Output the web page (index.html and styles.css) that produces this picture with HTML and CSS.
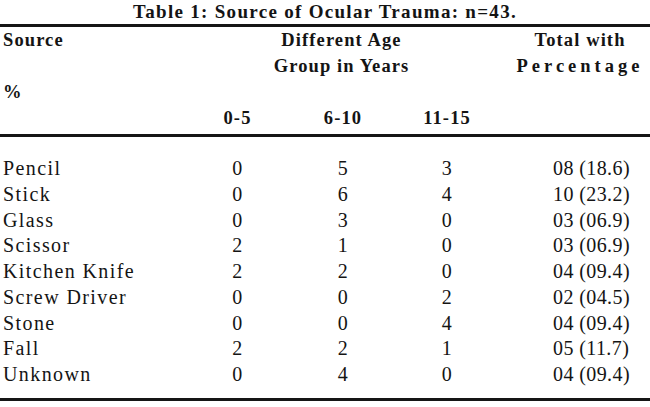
FILE: index.html
```html
<!DOCTYPE html>
<html>
<head>
<meta charset="utf-8">
<link rel="stylesheet" href="styles.css">
</head>
<body>
<div class="caption">Table 1: Source of Ocular Trauma: n=43.</div>
<table class="trauma">
  <colgroup>
    <col class="c-src"><col class="c-age"><col class="c-age2"><col class="c-age3"><col class="c-tot">
  </colgroup>
  <thead>
    <tr class="h1">
      <th class="src">Source</th>
      <th colspan="3" class="grp">Different Age</th>
      <th class="tot">Total with</th>
    </tr>
    <tr class="h2">
      <th></th>
      <th colspan="3" class="grp">Group in Years</th>
      <th class="tot pct">Percentage</th>
    </tr>
    <tr class="h3">
      <th class="src">%</th>
      <th colspan="3"></th>
      <th></th>
    </tr>
    <tr class="h4">
      <th></th>
      <th class="age">0-5</th>
      <th class="age">6-10</th>
      <th class="age">11-15</th>
      <th></th>
    </tr>
  </thead>
  <tbody>
    <tr class="first"><td class="name">Pencil</td><td>0</td><td>5</td><td>3</td><td class="total">08 (18.6)</td></tr>
    <tr><td class="name">Stick</td><td>0</td><td>6</td><td>4</td><td class="total">10 (23.2)</td></tr>
    <tr><td class="name">Glass</td><td>0</td><td>3</td><td>0</td><td class="total">03 (06.9)</td></tr>
    <tr><td class="name">Scissor</td><td>2</td><td>1</td><td>0</td><td class="total">03 (06.9)</td></tr>
    <tr><td class="name">Kitchen Knife</td><td>2</td><td>2</td><td>0</td><td class="total">04 (09.4)</td></tr>
    <tr><td class="name">Screw Driver</td><td>0</td><td>0</td><td>2</td><td class="total">02 (04.5)</td></tr>
    <tr><td class="name">Stone</td><td>0</td><td>0</td><td>4</td><td class="total">04 (09.4)</td></tr>
    <tr><td class="name">Fall</td><td>2</td><td>2</td><td>1</td><td class="total">05 (11.7)</td></tr>
    <tr class="last"><td class="name">Unknown</td><td>0</td><td>4</td><td>0</td><td class="total">04 (09.4)</td></tr>
  </tbody>
</table>
</body>
</html>
```

FILE: styles.css
```css
html, body {
  margin: 0;
  padding: 0;
  background: #ffffff;
}
body {
  width: 650px;
  color: #141414;
  font-family: "Liberation Serif", "Times New Roman", serif;
}
.caption {
  height: 24px;
  line-height: 24px;
  text-align: center;
  font-weight: bold;
  font-size: 19px;
  letter-spacing: 1.3px;
}
.trauma {
  width: 650px;
  border-collapse: collapse;
  table-layout: fixed;
  border-top: 3px solid #151515;
  border-bottom: 3px solid #151515;
}
.c-src { width: 185px; }
.c-age { width: 105px; }
.c-age2 { width: 106px; }
.c-age3 { width: 102px; }
.c-tot { width: 152px; }

.trauma th {
  padding: 0;
  font-weight: bold;
  font-size: 18.5px;
  letter-spacing: 1.1px;
  height: 26px;
  line-height: 26px;
  text-align: center;
  white-space: nowrap;
}
.trauma th.src {
  text-align: left;
  padding-left: 3px;
}
.trauma th.tot {
  padding-left: 12px;
}
.trauma th.pct {
  letter-spacing: 4px;
}
.trauma tr.h4 th {
  height: 29px;
  line-height: 26px;
  vertical-align: top;
}
.trauma thead {
  border-bottom: 3px solid #151515;
}
.trauma td {
  padding: 0;
  font-size: 20px;
  height: 25.75px;
  line-height: 25.75px;
  text-align: center;
  letter-spacing: 0.4px;
  white-space: nowrap;
}
.trauma td.name {
  text-align: left;
  padding-left: 3px;
  letter-spacing: 1.4px;
}
.trauma td.total {
  text-align: left;
  padding-left: 55px;
}
.trauma tr.first td {
  padding-top: 19px;
}
.trauma tr.last td {
  padding-bottom: 10px;
}
```
